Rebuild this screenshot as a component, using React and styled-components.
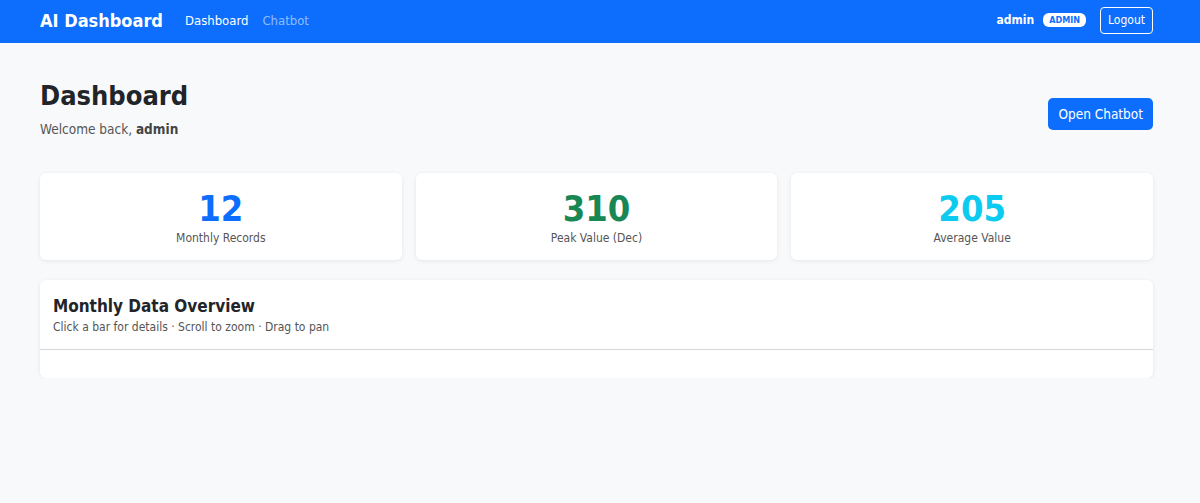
import styled, { createGlobalStyle } from "styled-components"

const GlobalStyle = createGlobalStyle`
  body {
    margin: 0;
    background: #f8f9fa;
    font-family: "DejaVu Sans Condensed", "DejaVu Sans", sans-serif;
    color: #212529;
  }
`

const Navbar = styled.nav`
  background: #0d6efd;
  height: 43px;
  display: flex;
  align-items: center;
  justify-content: space-between;
  padding: 0 47px 3px 40px;
  box-sizing: border-box;
`

const NavLeft = styled.div`
  display: flex;
  align-items: center;
  gap: 14px;
`

const Brand = styled.span`
  color: #fff;
  font-weight: bold;
  font-size: 18px;
  margin-right: 8px;
`

const NavLink = styled.a`
  color: ${(props) => (props.$active ? "#fff" : "rgba(255, 255, 255, 0.55)")};
  font-size: 13px;
  text-decoration: none;
`

const NavRight = styled.div`
  display: flex;
  align-items: center;
`

const UserName = styled.span`
  color: #fff;
  font-weight: bold;
  font-size: 12px;
  margin-right: 9px;
`

const Badge = styled.span`
  background: #fff;
  color: #0d6efd;
  font-weight: bold;
  font-size: 9px;
  padding: 2px 6px;
  border-radius: 6px;
  margin-right: 14px;
`

const OutlineButton = styled.button`
  background: transparent;
  color: #fff;
  border: 1px solid #fff;
  border-radius: 4px;
  font-family: inherit;
  font-size: 12px;
  height: 27px;
  padding: 0 7px;
`

const Main = styled.main`
  padding: 36px 47px 0 40px;
`

const Header = styled.div`
  display: flex;
  justify-content: space-between;
  align-items: center;
  margin-bottom: 36px;
`

const Title = styled.h1`
  margin: 0;
  font-size: 27px;
  line-height: 34px;
  font-weight: bold;
`

const Welcome = styled.p`
  margin: 8px 0 0;
  font-size: 13.5px;
  line-height: 16px;
  color: #555;
  b {
    color: #444;
  }
`

const PrimaryButton = styled.button`
  background: #0d6efd;
  color: #fff;
  border: none;
  border-radius: 5px;
  font-family: inherit;
  font-size: 13.5px;
  height: 32px;
  padding: 0 10px;
  margin-top: 12px;
`

const Stats = styled.div`
  display: grid;
  grid-template-columns: repeat(3, 1fr);
  gap: 14px;
  margin-bottom: 20px;
`

const Card = styled.div`
  background: #fff;
  border-radius: 6px;
  box-shadow: 0 1px 4px rgba(0, 0, 0, 0.08);
`

const StatCard = styled(Card)`
  height: 87px;
  display: flex;
  flex-direction: column;
  align-items: center;
  justify-content: center;
`

const StatValue = styled.div`
  color: ${(props) => props.$color};
  font-size: 36px;
  font-weight: bold;
  line-height: 42px;
`

const StatLabel = styled.div`
  font-size: 12px;
  color: #555;
  margin-top: 1px;
`

const ChartHeader = styled.div`
  padding: 15px 13px 15px;
  border-bottom: 1px solid #d5d7da;
`

const ChartTitle = styled.h2`
  margin: 0;
  font-size: 17px;
  line-height: 22px;
  font-weight: bold;
`

const ChartHint = styled.div`
  font-size: 12px;
  color: #555;
  margin-top: 3px;
`

const ChartBody = styled.div`
  height: 28px;
`

const stats = [
  { value: "12", label: "Monthly Records", color: "#0d6efd" },
  { value: "310", label: "Peak Value (Dec)", color: "#198754" },
  { value: "205", label: "Average Value", color: "#0dcaf0" },
]

export default function App() {
  return (
    <>
      <GlobalStyle />
      <Navbar>
        <NavLeft>
          <Brand>AI Dashboard</Brand>
          <NavLink $active>Dashboard</NavLink>
          <NavLink>Chatbot</NavLink>
        </NavLeft>
        <NavRight>
          <UserName>admin</UserName>
          <Badge>ADMIN</Badge>
          <OutlineButton>Logout</OutlineButton>
        </NavRight>
      </Navbar>
      <Main>
        <Header>
          <div>
            <Title>Dashboard</Title>
            <Welcome>
              Welcome back, <b>admin</b>
            </Welcome>
          </div>
          <PrimaryButton>Open Chatbot</PrimaryButton>
        </Header>
        <Stats>
          {stats.map((s) => (
            <StatCard key={s.label}>
              <StatValue $color={s.color}>{s.value}</StatValue>
              <StatLabel>{s.label}</StatLabel>
            </StatCard>
          ))}
        </Stats>
        <Card>
          <ChartHeader>
            <ChartTitle>Monthly Data Overview</ChartTitle>
            <ChartHint>Click a bar for details · Scroll to zoom · Drag to pan</ChartHint>
          </ChartHeader>
          <ChartBody />
        </Card>
      </Main>
    </>
  )
}
